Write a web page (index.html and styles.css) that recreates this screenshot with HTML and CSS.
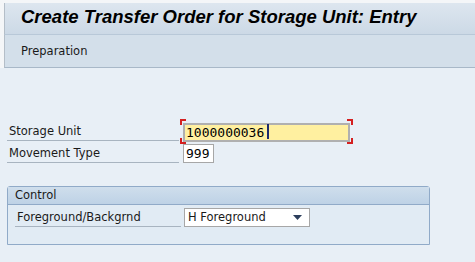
FILE: index.html
```html
<!DOCTYPE html>
<html lang="en">
<head>
    <meta charset="UTF-8">
    <title>Create Transfer Order for Storage Unit: Entry</title>
    <link rel="stylesheet" href="styles.css">
</head>
<body>
    <div class="janela">
        <div class="titulo">Create Transfer Order for Storage Unit: Entry</div>
        <div class="barra">
            <span class="botao">Preparation</span>
        </div>
        <div class="conteudo">
            <div class="linha">
                <label class="rotulo">Storage Unit</label>
                <span class="obrigatorio">
                    <input type="text" class="campo amarelo" value="1000000036"><span class="cursor"></span>
                </span>
            </div>
            <div class="linha">
                <label class="rotulo">Movement Type</label>
                <input type="text" class="campo curto" value="999">
            </div>

            <fieldset class="grupo">
                <div class="grupo-titulo">Control</div>
                <div class="grupo-corpo">
                    <div class="linha">
                        <label class="rotulo rotulo-grupo">Foreground/Backgrnd</label>
                        <div class="lista">
                            <span>H Foreground</span>
                            <svg width="9" height="5" viewBox="0 0 9 5"><path d="M0 0H9L4.5 5Z" fill="#2c3e5c"/></svg>
                        </div>
                    </div>
                </div>
            </fieldset>
        </div>
    </div>
</body>
</html>
```
FILE: styles.css
```css
body {
    margin: 0;
    font-family: "DejaVu Sans", Tahoma, sans-serif;
    background-color: #ffffff;
}
.janela {
    width: 475px;
    height: 262px;
    padding-left: 4px;
    box-sizing: border-box;
    background-color: #f4f6f8;
    overflow: hidden;
}
.titulo {
    height: 32px;
    margin-top: 3px;
    border-left: 1px solid #b4bec8;
    border-bottom: 1px solid #b8c8d8;
    background: linear-gradient(#dde6ef, #ccd9e6);
    padding-left: 16px;
    font-family: "Liberation Sans", Arial, sans-serif;
    font-weight: bold;
    font-style: italic;
    font-size: 18.5px;
    line-height: 28px;
    color: #000000;
    box-sizing: border-box;
}
.barra {
    height: 33px;
    border-left: 1px solid #b4bec8;
    border-bottom: 1px solid #a8b8c8;
    background-color: #d3dfea;
    padding-left: 16px;
    box-sizing: border-box;
    display: flex;
    align-items: center;
}
.botao {
    font-size: 11.5px;
    color: #1a1a1a;
}
.conteudo {
    background-color: #e8eff6;
    height: 195px;
    margin-left: -4px;
    padding-top: 52px;
    padding-left: 7px;
    box-sizing: border-box;
}
.linha {
    display: flex;
    align-items: center;
    height: 22px;
}
.rotulo {
    width: 172px;
    font-size: 11.5px;
    color: #1a1a1a;
    padding-left: 2px;
    height: 19px;
    line-height: 19px;
    border-bottom: 1px solid #a8b4c0;
    box-sizing: border-box;
    margin-right: 4px;
}
.campo {
    height: 19px;
    border: 1px solid #a7a7a7;
    background-color: #ffffff;
    font-family: "DejaVu Sans Mono", monospace;
    font-size: 13px;
    padding: 0 2px;
    box-sizing: border-box;
    outline: none;
}
.amarelo {
    width: 167px;
    background-color: #fff0a0;
    border-width: 2px;
    border-color: #b0b0b0;
    padding-left: 1px;
}
.curto {
    width: 31px;
}
.obrigatorio {
    position: relative;
    display: inline-block;
    height: 19px;
}
.obrigatorio::before,
.obrigatorio::after {
    content: "";
    position: absolute;
    left: -3px;
    width: 173px;
    height: 6px;
    border-left: 2px solid #d42020;
    border-right: 2px solid #d42020;
    box-sizing: border-box;
    -webkit-mask: linear-gradient(90deg, #000 6px, transparent 6px, transparent calc(100% - 6px), #000 calc(100% - 6px));
}
.obrigatorio::before {
    top: -3px;
    border-top: 2px solid #d42020;
}
.obrigatorio::after {
    top: 16px;
    border-bottom: 2px solid #d42020;
}
.cursor {
    position: absolute;
    left: 84px;
    top: 2px;
    width: 2px;
    height: 15px;
    background-color: #1c2a6e;
}
.grupo {
    margin: 22px 0 0 0;
    padding: 0;
    width: 423px;
    border: 1px solid #90aac8;
    border-radius: 3px 3px 0 0;
    box-sizing: border-box;
    background-color: #e1ebf4;
}
.grupo-titulo {
    height: 17px;
    background: linear-gradient(#cfdeec, #bed2e6);
    border-bottom: 1px solid #90aac8;
    padding-left: 7px;
    font-size: 11.5px;
    line-height: 17px;
    color: #1a1a1a;
}
.grupo-corpo {
    height: 39px;
    padding: 1px 0 0 7px;
    box-sizing: border-box;
}
.rotulo-grupo {
    width: 166px;
    margin-right: 3px;
}
.lista {
    width: 126px;
    height: 19px;
    border: 1px solid #a7a7a7;
    background-color: #ffffff;
    box-sizing: border-box;
    display: flex;
    align-items: center;
    justify-content: space-between;
    padding: 0 7px 0 3px;
    font-size: 11.5px;
    color: #1a1a1a;
}
```
